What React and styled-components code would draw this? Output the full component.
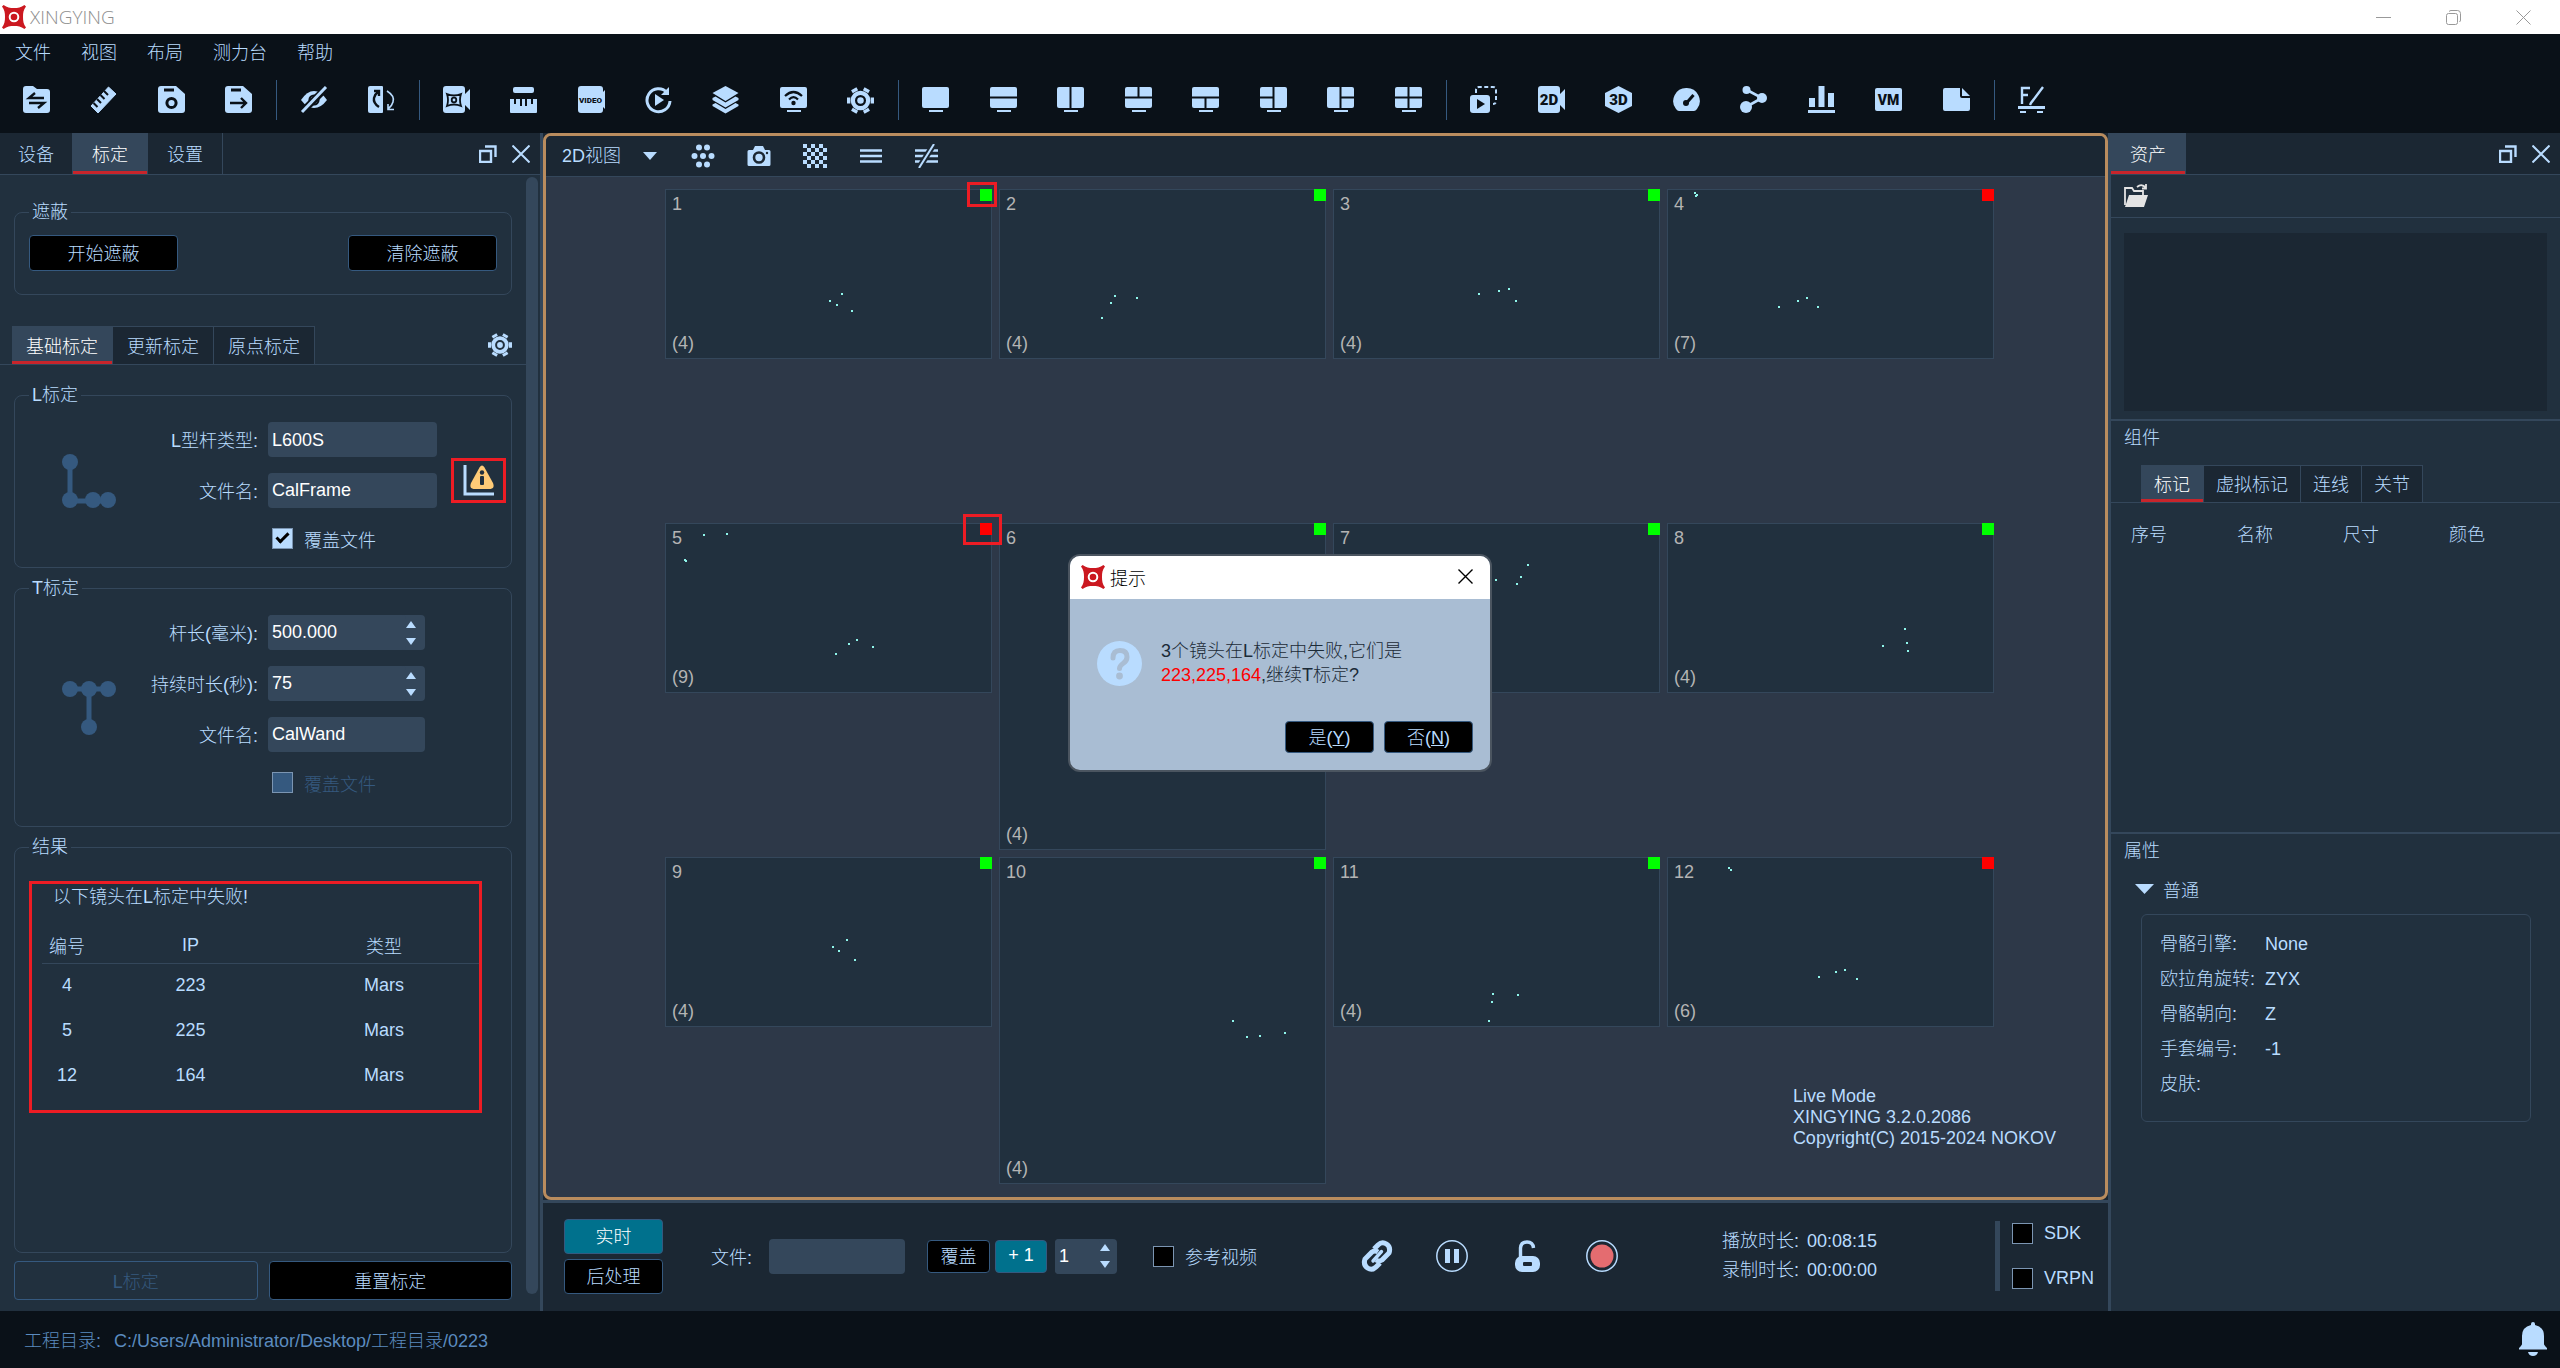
import React from 'react';
import styled, { createGlobalStyle } from 'styled-components';

const c = {
  ink: '#0a1118',
  bar: '#1b2733',
  panel: '#21303e',
  view: '#2d3848',
  line: '#34475b',
  blue: '#b9dcff',
  muted: '#35597f',
  red: '#c8252b',
  mark: '#ed1c24',
  orange: '#b98c5e',
  teal: '#00718d',
};

const Global = createGlobalStyle`
  *, *::before, *::after { box-sizing: border-box; }
  body {
    margin: 0;
    background: ${c.ink};
  }
  body, button, input, select {
    font-family: "Liberation Sans", "Noto Sans CJK SC", sans-serif;
    font-size: 18px;
    font-weight: 300;
    color: ${c.blue};
  }
  svg { display: block; }
`;

/* ---------- icons ---------- */

const Svg = ({ size = 28, w, h, box, children }) => (
  <svg width={w || size} height={h || size} viewBox={box || `0 0 ${w || size} ${h || size}`} fill="currentColor" aria-hidden="true">
    {children}
  </svg>
);
const cut = { stroke: c.ink, fill: 'none', strokeWidth: 2 };
const pen = { stroke: 'currentColor', fill: 'none', strokeWidth: 2 };

const Logo = ({ size = 24 }) => (
  <svg width={size} height={size} viewBox="0 0 24 24" aria-hidden="true">
    <path
      fill="#cb1820"
      d="M0 1.6 1.6 0C5 2.6 8 3 12 3S19 2.6 22.400 0L24 1.600C21.400 5 21 8 21 12s.4 7 3 10.400L22.400 24C19 21.400 16 21 12 21s-7 .4-10.400 3L0 22.400C2.600 19 3 16 3 12S2.600 5 0 1.600Z"
    />
    <circle cx="12" cy="12" r="4.300" fill="#cb1820" stroke="#fff" strokeWidth="2" />
  </svg>
);

const saveBody = 'M3 0h15l9 8v16q0 3-3 3H3q-3 0-3-3V3q0-3 3-3Z';
const camBody = 'M3 0h16q3 0 3 3v5l5-5v21l-5-5v5q0 3-3 3H3q-3 0-3-3V3q0-3 3-3Z';

const Gear = ({ size = 27 }) => (
  <svg width={size} height={size} viewBox="0 0 24 24" fill="currentColor" aria-hidden="true">
    <g fill="none" stroke="currentColor">
      <circle cx="12" cy="12" r="6.800" strokeWidth="3.800" />
      <path d="M12 3V0M12 24v-3M4.200 7.500 1.600 6M22.400 18l-2.600-1.500M4.200 16.500 1.600 18M22.400 6l-2.600 1.500" strokeWidth="5.500" transform="rotate(30 12 12)" />
    </g>
    <circle cx="12" cy="12" r="2.900" />
  </svg>
);

const Screen = ({ cuts }) => (
  <Svg size={28}>
    <rect x="0" y="1" width="27" height="21" rx="2" />
    <rect x="7" y="24" width="14" height="2" />
    <path d={cuts} {...cut} strokeWidth="2" />
  </Svg>
);

const label = { fill: c.ink, fontFamily: 'Roboto, sans-serif', fontWeight: 900, textAnchor: 'middle' };

const toolGroups = [
  {
    width: 230,
    items: [
      ['打开工程', <Svg key="i"><path d="M3 0h7l4 3h10q3 0 3 3v18q0 3-3 3H3q-3 0-3-3V3q0-3 3-3Z" /><path d="M21 12H6l6-5M6 17h15l-6 5" {...cut} strokeWidth="2.400" /></Svg>],
      ['测量', <Svg key="i"><path d="M18.500 1 26 8 8 27 1 20Z" strokeLinejoin="round" stroke="currentColor" strokeWidth="1" /><path d="m14 5 4 4M10.500 9l4 4M7 13l4 4M3.500 17l4 4" {...cut} /></Svg>],
      ['保存', <Svg key="i"><path d={saveBody} /><path d="M6 4h10" {...cut} strokeWidth="3" /><circle cx="13.500" cy="17" r="4.600" {...cut} strokeWidth="3" /></Svg>],
      ['另存为', <Svg key="i"><path d={saveBody} /><path d="M6 4h10" {...cut} strokeWidth="3" /><path d="M5 17h16M16 12l5 5-5 5" {...cut} strokeWidth="2.400" /></Svg>],
    ],
  },
  {
    width: 96,
    items: [
      ['隐藏', <Svg key="i"><path d="M1 14Q7 5 14 5t13 9q-6 8-13 8T1 14Z" /><circle cx="14" cy="14" r="4.500" {...cut} strokeWidth="2.200" /><path d="M27 1 2 26" {...cut} strokeWidth="7" /><path d="M26 1 2 26" {...pen} strokeWidth="3" /></Svg>],
      ['翻转', <Svg key="i"><path d="M2 0h12q1 0 1 1v25q0 1-1 1H2q-2 0-2-2V2q0-2 2-2Z" /><path d="M11 21q-6-4-5-9 1-4 4-6M6 5l5 0 0 5" {...cut} strokeWidth="2.400" /><path d="M19 5q8 5 6 11-1 4-5 7M20 18v5.500h6" {...pen} strokeWidth="1.600" /></Svg>],
    ],
  },
  {
    width: 432,
    items: [
      ['相机', <Svg key="i"><path d={camBody} /><path d="M4 8q7 3 14 0-2 6 0 12-7-3-14 0 2-6 0-12Z" {...cut} strokeWidth="1.800" /><circle cx="11" cy="14" r="2.300" {...cut} strokeWidth="1.800" /></Svg>],
      ['标尺', <Svg key="i"><rect x="3" y="1" width="21" height="6" rx="2" /><path d="M0 13h27v13q0 1-1 1H1q-1 0-1-1Z" /><path d="M5 12v6M11 12v8M16 12v8M22 12v6" {...cut} /></Svg>],
      ['视频', <Svg key="i"><path d="M3 0h19q3 0 3 3v3l2-2v19l-2-2v3q0 3-3 3H3q-3 0-3-3V3q0-3 3-3Z" /><text x="12.500" y="17" fontSize="8" {...label}>VIDEO</text></Svg>],
      ['回放', <Svg key="i"><path d="M22 6.500A11.500 11.500 0 1 0 25 15" {...pen} strokeWidth="3" /><path d="M24 1v8h-8Z" /><path d="m10 8 9 6-9 6Z" /></Svg>],
      ['图层', <Svg key="i"><path d="m13.500 0 13 7-13 8-13-8Z" /><path d="m.5 12 3-1.500 10 6 10-6 3 1.500v2l-13 7.500L.5 14Zm0 6.500 3-1.500 10 6 10-6 3 1.500v1.500l-13 7.500L.5 20Z" /></Svg>],
      ['投屏', <Svg key="i"><rect x="0" y="1" width="27" height="21" rx="2" /><rect x="7" y="24" width="14" height="2" /><path d="M5 10q8.500-8 17 0M9 13.500q4.500-4.500 9 0" {...cut} strokeWidth="2.200" /><circle cx="13.500" cy="17" r="2.200" fill={c.ink} /></Svg>],
      ['选项', <Gear key="i" />],
    ],
  },
  {
    width: 501,
    items: [
      ['单视图', <Screen key="i" cuts="" />],
      ['上下视图', <Screen key="i" cuts="M0 11.500h28" />],
      ['左右视图', <Screen key="i" cuts="M13.500 0v22" />],
      ['上二下一', <Screen key="i" cuts="M0 11.500h28M13.500 0v11" />],
      ['上一下二', <Screen key="i" cuts="M0 11.500h28M13.500 12v10" />],
      ['左二右一', <Screen key="i" cuts="M0 11.500h13M13.500 0v22" />],
      ['左一右二', <Screen key="i" cuts="M14 11.500h14M13.500 0v22" />],
      ['四视图', <Screen key="i" cuts="M0 11.500h28M13.500 0v22" />],
    ],
  },
  {
    width: 501,
    items: [
      ['播放窗口', <Svg key="i"><rect x="0" y="9" width="20" height="18" rx="3" /><path d="m7 13 8 5-8 5Z" fill={c.ink} /><path d="M6 7V4q0-3 3-3h14q3 0 3 3v11q0 3-3 3" {...pen} strokeDasharray="4 2.500" /></Svg>],
      ['2D', <Svg key="i"><path d={camBody} /><text x="11" y="19" fontSize="15" {...label}>2D</text></Svg>],
      ['3D', <Svg key="i"><path d="m13.500 0 13.500 7v13l-13.500 7L0 20V7Z" /><text x="13.500" y="19" fontSize="15" {...label}>3D</text></Svg>],
      ['仪表', <Svg key="i"><path d="M13.500 2a13 13 0 0 1 10.500 21q-1.500 2-3 2H6q-1.500 0-3-2A13 13 0 0 1 13.500 2Z" /><path d="m13.500 17 7-8" {...cut} strokeWidth="3" /><circle cx="13" cy="17" r="3" fill={c.ink} /></Svg>],
      ['骨骼', <Svg key="i"><path d="m7 4 15 8L6 21" {...pen} strokeWidth="2.600" /><circle cx="6.500" cy="4" r="4" /><circle cx="22" cy="12" r="5" /><circle cx="6" cy="21" r="6" /></Svg>],
      ['图表', <Svg key="i"><path d="M1 12h6v9H1Zm9.500-12h6v21h-6ZM20 7h6v14h-6ZM0 24h27v3H0Z" /></Svg>],
      ['VM', <Svg key="i"><rect x="0" y="2" width="27" height="23" rx="2" /><text x="13.500" y="18.500" fontSize="14" {...label}>VM</text></Svg>],
      ['文档', <Svg key="i"><path d="M2 2h15v8q0 2 2 2h8v11q0 2-2 2H2q-2 0-2-2V4q0-2 2-2Z" /><path d="m19 2 8 8h-8Z" /></Svg>],
    ],
  },
  {
    width: 28,
    items: [
      ['力台', <Svg key="i"><path d="M4 18V2h8M4 9h6" {...pen} strokeWidth="2.400" /><path d="M25 1 13 17l-1 2" {...pen} strokeWidth="2.400" /><path d="M0 20h27v3H0Z" /><path d="M2 26h6M19 26h6" {...pen} /></Svg>],
    ],
  },
];

const RestoreIcon = () => (
  <Svg size={18}><path d="M1 6h11v11H1ZM6 1.500h10.500V12" {...pen} strokeWidth="2.400" /></Svg>
);
const CloseIcon = ({ size = 18, width = 2 }) => (
  <Svg size={size}><path d={`M.5.5l${size - 1} ${size - 1}M${size - 0.5}.5L.5 ${size - 0.5}`} {...pen} strokeWidth={width} /></Svg>
);

/* ---------- window chrome ---------- */

const Page = styled.div`
  min-height: 100vh;
  display: flex;
  flex-direction: column;
  background: ${c.ink};
`;
const TitleBar = styled.header`
  display: flex;
  align-items: center;
  height: 34px;
  padding: 0 29px 0 2px;
  gap: 4px;
  background: #fff;
  color: #8e8e8e;
`;
const AppName = styled.span`
  flex: 1;
  font-family: "Open Sans", "Noto Sans", sans-serif;
  font-size: 19px;
`;
const WindowButtons = styled.div`
  display: flex;
  gap: 55px;
`;
const IconButton = styled.button`
  display: flex;
  align-items: center;
  justify-content: center;
  width: ${(p) => p.$size || 28}px;
  height: ${(p) => p.$size || 28}px;
  padding: 0;
  border: 0;
  background: none;
  color: ${(p) => p.$color || c.blue};
`;
const MenuBar = styled.nav`
  display: flex;
  align-items: center;
  gap: 30px;
  height: 33px;
  padding: 0 15px;
`;
const PlainLink = styled.a`
  color: ${c.blue};
  text-decoration: none;
`;
const ToolBar = styled.div`
  display: flex;
  align-items: center;
  height: 66px;
  padding: 0 23px;
`;
const ToolGroup = styled.div`
  display: flex;
  justify-content: space-between;
  width: ${(p) => p.$width}px;
`;
const ToolDivider = styled.span`
  width: 1px;
  height: 40px;
  margin: 0 23px;
  background: ${c.muted};
`;
const Body = styled.main`
  flex: 1;
  display: flex;
`;
const StatusBar = styled.footer`
  display: flex;
  align-items: center;
  gap: 13px;
  height: 57px;
  padding: 0 13px 2px 24px;
  color: #5b8bbf;
`;
const Grow = styled.span`
  flex: 1;
`;

/* ---------- shared controls ---------- */

const TabBar = styled.div`
  display: flex;
  height: ${(p) => p.$height || 42}px;
  padding: 0 ${(p) => p.$right || 0}px 0 ${(p) => p.$left || 0}px;
  border-bottom: 1px solid ${c.line};
  background: ${(p) => (p.$plain ? 'transparent' : c.bar)};
`;
const Tab = styled.button`
  padding: 0 ${(p) => p.$pad || 19}px 2px;
  border: solid ${c.line};
  border-width: ${(p) => (p.$boxed ? 1 : 0)}px 1px 0 0;
  background: ${(p) => (p.$active ? c.line : c.bar)};
  color: ${(p) => (p.$active ? '#fff' : c.blue)};
  box-shadow: ${(p) => (p.$active ? `inset 0 -3px ${c.red}` : 'none')};
`;
const TabTools = styled.div`
  display: flex;
  align-items: center;
  gap: 15px;
  margin-left: auto;
  padding-right: 10px;
`;
const Button = styled.button`
  width: ${(p) => (p.$width ? `${p.$width}px` : 'auto')};
  height: ${(p) => p.$height || 36}px;
  padding: 0 0 2px;
  border: 1px solid ${c.muted};
  border-radius: 4px;
  background: #000;
  color: ${c.blue};
  ${(p) => p.$on && `background: ${c.teal}; color: #fff;`}
  &:disabled {
    background: transparent;
    color: ${c.muted};
  }
`;
const inputLook = `
  width: 100%;
  min-width: 0;
  height: 35px;
  padding: 0 4px;
  border: 0;
  border-radius: 4px;
  outline: 0;
  background: ${c.line};
  color: #fff;
`;
const TextInput = styled.input`${inputLook}`;
const Select = styled.select`
  ${inputLook}
  appearance: none;
`;
const SpinBox = styled.div`
  display: flex;
  width: ${(p) => (p.$width ? `${p.$width}px` : '100%')};
  border-radius: 4px;
  background: ${c.line};
`;
const SpinButtons = styled.div`
  display: flex;
  flex-direction: column;
  justify-content: center;
  gap: 10px;
  padding-right: ${(p) => p.$right || 9}px;
`;
const SpinButton = styled.button`
  padding: 0;
  border: 0;
  background: none;
  color: ${c.blue};
`;
const Spin = ({ id, value, width, right, label: name }) => (
  <SpinBox $width={width}>
    <TextInput id={id} defaultValue={value} inputMode="decimal" aria-label={name} />
    <SpinButtons $right={right}>
      <SpinButton aria-label="增加"><Svg w={10} h={7}><path d="m5 0 5 7H0Z" /></Svg></SpinButton>
      <SpinButton aria-label="减少"><Svg w={10} h={7}><path d="m5 7 5-7H0Z" /></Svg></SpinButton>
    </SpinButtons>
  </SpinBox>
);
const CheckLabel = styled.label`
  display: flex;
  align-items: center;
  gap: 11px;
  color: ${(p) => (p.$off ? c.muted : c.blue)};
`;
const CheckBox = styled.input`
  appearance: none;
  display: grid;
  place-items: center;
  width: 21px;
  height: 21px;
  margin: 0;
  border: 1px solid #7b95b2;
  background: #000;
  &:disabled { background: ${c.muted}; }
  &:checked { background: ${c.blue}; }
  &:checked::after {
    content: "";
    width: 13px;
    height: 7px;
    margin-bottom: 4px;
    border: solid #000;
    border-width: 0 0 3px 3px;
    transform: rotate(-45deg);
  }
`;

/* ---------- left panel ---------- */

const LeftPanel = styled.aside`
  display: flex;
  flex-direction: column;
  flex: 0 0 543px;
  border-right: 3px solid ${c.line};
  background: ${c.panel};
`;
const Scroller = styled.div`
  flex: 1;
  display: flex;
`;
const ScrollTrack = styled.div`
  width: 12px;
  margin: 2px 2px 17px 0;
  border-radius: 6px;
  background: ${c.line};
`;
const PanelContent = styled.div`
  flex: 1;
  display: flex;
  flex-direction: column;
  padding-top: 24px;
`;
const FormsColumn = styled.div`
  flex: 1;
  display: flex;
  flex-direction: column;
  padding-top: 17px;
`;
const Group = styled.fieldset`
  ${(p) => p.$grow && 'flex: 1;'}
  min-width: 0;
  margin: 0 14px ${(p) => p.$after}px;
  padding: 0 14px ${(p) => p.$bottom || 12}px;
  border: 1px solid ${c.line};
  border-radius: 8px;
`;
const Legend = styled.legend`
  padding: 0 3px;
  line-height: 26px;
`;
const SplitRow = styled.div`
  display: flex;
  justify-content: space-between;
  padding-top: 10px;
`;
const CalibrationBody = styled.div`
  display: flex;
  align-items: center;
`;
const WandIcon = styled.div`
  display: flex;
  justify-content: center;
  flex: 0 0 119px;
  color: ${c.muted};
`;
const Form = styled.div`
  display: grid;
  grid-template-columns: 110px ${(p) => p.$field}px;
  gap: 16px 10px;
  align-items: center;
  padding: 14px 0 ${(p) => p.$bottom || 0}px;
`;
const FieldLabel = styled.label`
  padding-bottom: 2px;
  text-align: right;
  white-space: nowrap;
`;
const FormCheck = styled.div`
  grid-column: 2;
  display: flex;
  align-items: center;
  height: 29px;
  padding-left: 4px;
`;
const WarningButton = styled.button`
  display: flex;
  align-items: center;
  justify-content: center;
  flex: 0 0 55px;
  height: 45px;
  margin: 0 -9px 0 14px;
  padding: 0;
  border: 3px solid ${c.mark};
  background: none;
  color: ${c.blue};
`;
const ResultBox = styled.div`
  width: 453px;
  margin-top: 21px;
  padding: 0 0 12px 10px;
  border: 3px solid ${c.mark};
`;
const ResultTable = styled.table`
  width: 100%;
  border-collapse: collapse;
  table-layout: fixed;
  caption {
    padding: 0 11px;
    line-height: 26px;
    text-align: left;
  }
  th {
    height: 53px;
    padding: 18px 0 0;
    border-bottom: 1px solid ${c.line};
    font-weight: 300;
  }
  td {
    height: 45px;
    padding: 0;
    text-align: center;
  }
`;
const FooterButtons = styled.div`
  display: grid;
  grid-template-columns: 1fr 1fr;
  gap: 11px;
  margin: 0 14px 11px;
`;

/* ---------- center ---------- */

const Center = styled.section`
  flex: 1;
  min-width: 0;
  display: flex;
  flex-direction: column;
  background: ${c.bar};
`;
const Viewer = styled.div`
  position: relative;
  flex: 1;
  display: flex;
  flex-direction: column;
  border: 3px solid ${c.orange};
  border-radius: 8px;
  background: ${c.view};
`;
const ViewBar = styled.div`
  display: flex;
  align-items: center;
  gap: 32px;
  height: 41px;
  padding: 0 16px;
  border-bottom: 1px solid ${c.line};
  border-radius: 5px 5px 0 0;
  background: ${c.bar};
`;
const ViewPicker = styled.label`
  display: flex;
  align-items: center;
  gap: 21px;
  margin-right: 2px;
`;
const ViewSelect = styled.select`
  appearance: none;
  padding: 0;
  border: 0;
  outline: 0;
  background: none;
  color: ${c.blue};
`;
const CameraGrid = styled.div`
  display: grid;
  grid-template-columns: repeat(4, minmax(0, 327px));
  gap: 7px;
  justify-content: center;
  padding: 12px 0 0 8px;
`;
const CameraSlot = styled.div`
  aspect-ratio: 1;
`;
const CameraCell = styled.figure`
  position: relative;
  display: flex;
  flex-direction: column;
  justify-content: space-between;
  aspect-ratio: ${(p) => (p.$tall ? '1' : '327 / 170')};
  margin: 0;
  padding: 2px 6px 3px;
  border: 1px solid ${c.line};
  background: ${c.panel};
  color: #b4b4b4;
  line-height: 24px;
`;
const CameraStatus = styled.i`
  position: absolute;
  top: -1px;
  right: -1px;
  width: 12px;
  height: 12px;
  background: ${(p) => (p.$ok ? '#00ff00' : '#ff0000')};
`;
const StatusMark = styled.i`
  position: absolute;
  z-index: 1;
  top: ${(p) => (p.$large ? -10 : -8)}px;
  right: ${(p) => (p.$large ? -11 : -6)}px;
  width: ${(p) => (p.$large ? 39 : 30)}px;
  height: ${(p) => (p.$large ? 31 : 25)}px;
  border: 3px solid ${c.mark};
`;
const Markers = styled.svg`
  position: absolute;
  inset: -1px;
`;
const BuildInfo = styled.p`
  position: absolute;
  right: 49px;
  bottom: 48px;
  margin: 0;
  line-height: 21px;
`;

const PlayBar = styled.div`
  display: flex;
  align-items: center;
  gap: 104px;
  height: 111px;
  padding: 0 14px 2px 21px;
  border-top: 3px solid ${c.line};
`;
const Cluster = styled.div`
  display: flex;
  align-items: center;
  gap: ${(p) => p.$gap || 0}px;
  ${(p) => p.$end && 'margin-left: auto;'}
`;
const ModeButtons = styled.div`
  display: flex;
  flex-direction: column;
  gap: 5px;
`;
const FileField = styled.label`
  display: flex;
  align-items: center;
  gap: 17px;
  margin: 0 22px 0 48px;
  white-space: nowrap;
  input { width: 136px; }
`;
const NameButtons = styled.div`
  display: flex;
  align-items: center;
  gap: 5px;
  margin-right: 8px;
`;
const ReferenceCheck = styled.div`
  margin-left: 36px;
`;
const Durations = styled.dl`
  display: grid;
  grid-template-columns: auto auto;
  column-gap: 8px;
  margin: 0;
  line-height: 29px;
  dd { margin: 0; }
`;
const StreamChecks = styled.div`
  display: flex;
  flex-direction: column;
  gap: 24px;
  padding: 2px 0 2px 12px;
  border-left: 5px solid ${c.line};
`;

/* ---------- right panel ---------- */

const RightPanel = styled.aside`
  display: flex;
  flex-direction: column;
  flex: 0 0 452px;
  border-left: 3px solid ${c.line};
  background: ${c.panel};
`;
const AssetTools = styled.div`
  display: flex;
  align-items: center;
  height: 43px;
  padding: 0 13px;
  border-bottom: 1px solid ${c.line};
`;
const AssetList = styled.div`
  height: 178px;
  margin: 15px 13px 8px;
  background: ${c.bar};
`;
const Section = styled.section`
  flex: ${(p) => p.$share} 1 0;
  border-top: 2px solid ${c.line};
`;
const SectionTitle = styled.h2`
  margin: 0;
  padding-left: 13px;
  font-size: 18px;
  font-weight: 300;
  line-height: 34px;
`;
const MarkerTabs = styled.div`
  padding-top: 10px;
`;
const MarkerTable = styled.table`
  width: 424px;
  border-collapse: collapse;
  table-layout: fixed;
  th {
    height: 60px;
    padding: 0 0 0 20px;
    font-weight: 300;
    text-align: left;
  }
`;
const FoldButton = styled.button`
  display: flex;
  align-items: center;
  gap: 9px;
  height: 32px;
  margin: 5px 0 9px 24px;
  padding: 0;
  border: 0;
  background: none;
`;
const Properties = styled.dl`
  display: grid;
  grid-template-columns: 105px 1fr;
  margin: 0 29px 0 30px;
  padding: 12px 18px 19px;
  border: 1px solid ${c.line};
  border-radius: 6px;
  line-height: 35px;
  white-space: nowrap;
  dd { margin: 0; }
`;

/* ---------- dialog ---------- */

const Overlay = styled.div`
  position: fixed;
  inset: 0;
  z-index: 2;
  display: flex;
  align-items: center;
  justify-content: center;
  padding-bottom: 42px;
`;
const Dialog = styled.div`
  width: 424px;
  overflow: hidden;
  border: 2px solid #4b5560;
  border-radius: 12px;
  background: #a9bdd3;
  color: #1b2a36;
`;
const DialogHead = styled.div`
  display: flex;
  align-items: center;
  gap: 5px;
  height: 43px;
  padding: 0 17px 2px 11px;
  background: #fff;
  color: #000;
`;
const DialogTitle = styled.span`
  flex: 1;
`;
const DialogMessage = styled.div`
  display: flex;
  align-items: center;
  gap: 19px;
  padding: 40px 17px 34px 27px;
  color: #1b2a36;
  line-height: 24px;
  p { margin: 0; }
  svg { flex: none; }
`;
const Failed = styled.span`
  color: #ff0000;
`;
const DialogButtons = styled.div`
  display: flex;
  justify-content: flex-end;
  gap: 10px;
  padding: 0 17px 17px;
`;

/* ---------- data ---------- */

const cameras = [
  { n: 1, count: 4, ok: true, mark: 'small', dots: [[177, 105], [165, 112], [172, 116], [187, 122]] },
  { n: 2, count: 4, ok: true, dots: [[116, 107], [138, 109], [112, 114], [103, 129]] },
  { n: 3, count: 4, ok: true, dots: [[146, 105], [166, 102], [176, 100], [183, 112]] },
  { n: 4, count: 7, dots: [[28, 4], [30, 6], [29, 7], [112, 118], [131, 112], [140, 109], [151, 118]] },
  { n: 5, count: 9, mark: 'large', dots: [[39, 12], [62, 11], [20, 37], [21, 38], [192, 117], [184, 121], [208, 124], [171, 131]] },
  { n: 6, count: 4, ok: true, tall: true, dots: [] },
  { n: 7, ok: true, dots: [[163, 57], [195, 42], [188, 54], [184, 61]] },
  { n: 8, count: 4, ok: true, dots: [[238, 106], [240, 120], [216, 123], [241, 128]] },
  { n: 9, count: 4, ok: true, dots: [[182, 83], [168, 90], [174, 94], [190, 103]] },
  { n: 10, count: 4, ok: true, tall: true, dots: [[234, 164], [248, 180], [261, 179], [286, 176]] },
  { n: 11, count: 4, ok: true, dots: [[160, 137], [185, 138], [159, 145], [156, 164]] },
  { n: 12, count: 6, dots: [[62, 11], [64, 13], [152, 120], [169, 115], [178, 113], [190, 122]] },
];

const failures = [['4', '223', 'Mars'], ['5', '225', 'Mars'], ['12', '164', 'Mars']];

const properties = [['骨骼引擎:', 'None'], ['欧拉角旋转:', 'ZYX'], ['骨骼朝向:', 'Z'], ['手套编号:', '-1'], ['皮肤:', '']];

/* ---------- page ---------- */

const Camera = ({ n, count, ok, tall, mark, dots }) => (
  <CameraSlot>
    <CameraCell $tall={tall}>
      <Markers viewBox={`0 0 327 ${tall ? 327 : 170}`} fill="#8ff5ea" aria-hidden="true">
        {dots.map(([x, y]) => <rect key={`${x}-${y}`} x={x - 1} y={y - 1} width="2" height="2" />)}
      </Markers>
      <span>{n}</span>
      {count && <span>({count})</span>}
      <CameraStatus $ok={ok} />
      {mark && <StatusMark $large={mark === 'large'} />}
    </CameraCell>
  </CameraSlot>
);

const CalibrationForms = () => (
  <FormsColumn>
    <Group $after={7} $bottom={14}>
      <Legend>L标定</Legend>
      <CalibrationBody>
        <WandIcon>
          <Svg w={54} h={54}>
            <path d="M8 8v39h38" {...pen} strokeWidth="5" />
            <circle cx="8" cy="8" r="8" /><circle cx="8" cy="46" r="8" /><circle cx="31" cy="46" r="8" /><circle cx="46" cy="46" r="8" />
          </Svg>
        </WandIcon>
        <Form $field={169}>
          <FieldLabel htmlFor="l-type">L型杆类型:</FieldLabel>
          <Select id="l-type"><option>L600S</option></Select>
          <FieldLabel htmlFor="l-file">文件名:</FieldLabel>
          <TextInput id="l-file" defaultValue="CalFrame" />
          <FormCheck>
            <CheckLabel><CheckBox type="checkbox" defaultChecked />覆盖文件</CheckLabel>
          </FormCheck>
        </Form>
        <WarningButton aria-label="L标定警告">
          <Svg w={31} h={33}>
            <path d="M2 1v29h29" {...pen} strokeWidth="3" />
            <path d="M16.500 3.500q2.500-4 5 0L30 19q2 5-2.500 6h-17Q6 24 8 19Z" fill="#ffcb77" />
            <circle cx="19" cy="8.500" r="2.200" fill={c.panel} />
            <rect x="17" y="12" width="4" height="9" rx="1" fill={c.panel} />
          </Svg>
        </WarningButton>
      </CalibrationBody>
    </Group>
    <Group $after={7}>
      <Legend>T标定</Legend>
      <CalibrationBody>
        <WandIcon>
          <Svg w={54} h={54}>
            <path d="M8 8h38M27 8v38" {...pen} strokeWidth="5" />
            <circle cx="8" cy="8" r="8" /><circle cx="27" cy="8" r="8" /><circle cx="46" cy="8" r="8" /><circle cx="27" cy="46" r="8" />
          </Svg>
        </WandIcon>
        <Form $field={157} $bottom={17}>
          <FieldLabel htmlFor="t-length">杆长(毫米):</FieldLabel>
          <Spin id="t-length" value="500.000" />
          <FieldLabel htmlFor="t-time">持续时长(秒):</FieldLabel>
          <Spin id="t-time" value="75" />
          <FieldLabel htmlFor="t-file">文件名:</FieldLabel>
          <TextInput id="t-file" defaultValue="CalWand" />
          <FormCheck>
            <CheckLabel $off><CheckBox type="checkbox" disabled />覆盖文件</CheckLabel>
          </FormCheck>
        </Form>
      </CalibrationBody>
    </Group>
    <Group $after={8} $grow>
      <Legend>结果</Legend>
      <ResultBox>
        <ResultTable>
          <caption>以下镜头在L标定中失败!</caption>
          <colgroup><col width="50" /><col width="197" /><col /></colgroup>
          <thead><tr><th>编号</th><th>IP</th><th>类型</th></tr></thead>
          <tbody>
            {failures.map((row) => (
              <tr key={row[0]}>{row.map((cell) => <td key={cell}>{cell}</td>)}</tr>
            ))}
          </tbody>
        </ResultTable>
      </ResultBox>
    </Group>
    <FooterButtons>
      <Button $height={39} disabled>L标定</Button>
      <Button $height={39}>重置标定</Button>
    </FooterButtons>
  </FormsColumn>
);

const CalibrationPanel = () => (
  <LeftPanel>
    <TabBar>
      <Tab $pad={18}>设备</Tab>
      <Tab $active>标定</Tab>
      <Tab>设置</Tab>
      <TabTools>
        <IconButton $size={18} aria-label="浮动"><RestoreIcon /></IconButton>
        <IconButton $size={18} aria-label="关闭"><CloseIcon /></IconButton>
      </TabTools>
    </TabBar>
    <Scroller>
      <PanelContent>
        <Group $after={31} $bottom={23}>
          <Legend>遮蔽</Legend>
          <SplitRow>
            <Button $width={149}>开始遮蔽</Button>
            <Button $width={149}>清除遮蔽</Button>
          </SplitRow>
        </Group>
        <TabBar $height={39} $left={12} $right={4} $plain>
          <Tab $pad={14} $boxed $active>基础标定</Tab>
          <Tab $pad={14} $boxed>更新标定</Tab>
          <Tab $pad={14} $boxed>原点标定</Tab>
          <TabTools><IconButton $size={24} aria-label="标定设置"><Gear size={24} /></IconButton></TabTools>
        </TabBar>
        <CalibrationForms />
      </PanelContent>
      <ScrollTrack />
    </Scroller>
  </LeftPanel>
);

const CenterArea = () => (
  <Center>
    <Viewer>
      <ViewBar>
        <ViewPicker>
          <ViewSelect aria-label="视图"><option>2D视图</option></ViewSelect>
          <Svg w={14} h={8}><path d="M0 0h14L7 8Z" /></Svg>
        </ViewPicker>
        <IconButton $size={24} aria-label="标记点">
          <Svg size={24}>
            <circle cx="8" cy="3.500" r="3" /><circle cx="16" cy="3.500" r="3" />
            <circle cx="3.500" cy="12" r="3" /><circle cx="12" cy="12" r="3" /><circle cx="20.500" cy="12" r="3" />
            <circle cx="8" cy="20.500" r="3" /><circle cx="16" cy="20.500" r="3" />
          </Svg>
        </IconButton>
        <IconButton $size={24} aria-label="快照">
          <Svg size={24}>
            <path d="M8 2h8l2 4h4q1.500 0 1.500 1.500v13Q23.500 22 22 22H2Q.5 22 .5 20.500v-13Q.5 6 2 6h4Z" />
            <circle cx="12" cy="13.500" r="5" fill="none" stroke={c.bar} strokeWidth="2.600" /><circle cx="20" cy="9" r="1.200" fill={c.bar} />
          </Svg>
        </IconButton>
        <IconButton $size={24} aria-label="网格">
          <Svg size={24}>
            {[0, 1, 2, 3, 4, 5].flatMap((y) => [0, 1, 2].map((x) => (
              <rect key={`${x}${y}`} x={x * 8 + (y % 2) * 4} y={y * 4} width="4" height="4" />
            )))}
          </Svg>
        </IconButton>
        <IconButton $size={24} aria-label="列表">
          <Svg size={24}><path d="M1 6.500h22M1 12h22M1 17.500h22" {...pen} strokeWidth="2.400" /></Svg>
        </IconButton>
        <IconButton $size={24} aria-label="取消列表">
          <Svg size={24}>
            <path d="M0 6.500h23M0 12h23M0 17.500h23" {...pen} strokeWidth="2.400" />
            <path d="M19 0 4 24" fill="none" stroke={c.bar} strokeWidth="6" />
            <path d="M19 0 4 24" {...pen} />
          </Svg>
        </IconButton>
      </ViewBar>
      <CameraGrid>
        {cameras.map((cam) => <Camera key={cam.n} {...cam} />)}
      </CameraGrid>
      <BuildInfo>Live Mode<br />XINGYING 3.2.0.2086<br />Copyright(C) 2015-2024 NOKOV</BuildInfo>
    </Viewer>
    <PlayBar>
      <Cluster>
        <ModeButtons>
          <Button $width={99} $height={35} $on>实时</Button>
          <Button $width={99} $height={35}>后处理</Button>
        </ModeButtons>
        <FileField>文件:<TextInput /></FileField>
        <NameButtons>
          <Button $width={63} $height={33}>覆盖</Button>
          <Button $width={52} $height={33} $on>+ 1</Button>
        </NameButtons>
        <Spin value="1" width={62} right={7} label="序号" />
        <ReferenceCheck><CheckLabel><CheckBox type="checkbox" />参考视频</CheckLabel></ReferenceCheck>
      </Cluster>
      <Cluster $gap={43}>
        <IconButton $size={32} aria-label="连接">
          <Svg size={32}>
            <g fill="none" stroke="currentColor" strokeWidth="5">
              <path d="m13 9 4-4q4-4 8.500-1t2.500 9l-7 7q-3 2-6 0" />
              <path d="m19 23-4 4q-4 4-8.500 1T4 19l7-7q3-2 6 0" />
            </g>
            <path d="m12 21 8.500-9.500" {...pen} strokeWidth="3.400" strokeLinecap="round" />
          </Svg>
        </IconButton>
        <IconButton $size={32} aria-label="暂停">
          <Svg size={32}><circle cx="16" cy="16" r="15.200" {...pen} strokeWidth="1.500" /><path d="M9 9h5v14H9Zm9 0h5v14h-5Z" /></Svg>
        </IconButton>
        <IconButton $size={32} aria-label="解锁">
          <Svg size={32}>
            <path d="M9.500 18V8Q10 2 16 2t6.500 6" {...pen} strokeWidth="3.400" />
            <rect x="4" y="16" width="25" height="16" rx="7" /><rect x="12" y="22" width="9" height="4" rx="1" fill={c.bar} />
          </Svg>
        </IconButton>
        <IconButton $size={32} aria-label="录制">
          <Svg size={32}><circle cx="16" cy="16" r="15.200" {...pen} strokeWidth="1.500" /><circle cx="16" cy="16" r="11.500" fill="#e46c70" /></Svg>
        </IconButton>
      </Cluster>
      <Durations>
        <dt>播放时长:</dt><dd>00:08:15</dd>
        <dt>录制时长:</dt><dd>00:00:00</dd>
      </Durations>
      <Cluster $end>
        <StreamChecks>
          <CheckLabel><CheckBox type="checkbox" />SDK</CheckLabel>
          <CheckLabel><CheckBox type="checkbox" />VRPN</CheckLabel>
        </StreamChecks>
      </Cluster>
    </PlayBar>
  </Center>
);

const AssetPanel = () => (
  <RightPanel>
    <TabBar>
      <Tab $active>资产</Tab>
      <TabTools>
        <IconButton $size={18} aria-label="浮动"><RestoreIcon /></IconButton>
        <IconButton $size={18} aria-label="关闭"><CloseIcon /></IconButton>
      </TabTools>
    </TabBar>
    <AssetTools>
      <IconButton $size={24} $color="#e4e4e4" aria-label="打开">
        <Svg size={24}>
          <path d="M1 21V4h7l2 3h9v4" {...pen} strokeWidth="1.800" />
          <path d="M5 11h19l-4 12H1Z" />
          <path d="M13 3q5-4 9 1M22 0v4.500h-4" {...pen} strokeWidth="1.800" />
        </Svg>
      </IconButton>
    </AssetTools>
    <AssetList />
    <Section $share={412}>
      <SectionTitle>组件</SectionTitle>
      <MarkerTabs>
        <TabBar $height={38} $left={30} $plain>
          <Tab $pad={13} $boxed $active>标记</Tab>
          <Tab $pad={12} $boxed>虚拟标记</Tab>
          <Tab $pad={12} $boxed>连线</Tab>
          <Tab $pad={12} $boxed>关节</Tab>
        </TabBar>
      </MarkerTabs>
      <MarkerTable>
        <thead><tr><th>序号</th><th>名称</th><th>尺寸</th><th>颜色</th></tr></thead>
      </MarkerTable>
    </Section>
    <Section $share={478}>
      <SectionTitle>属性</SectionTitle>
      <FoldButton aria-expanded="true">
        <Svg w={19} h={10}><path d="M0 0h19l-9.500 10Z" /></Svg>
        普通
      </FoldButton>
      <Properties>
        {properties.map(([name, value]) => (
          <React.Fragment key={name}><dt>{name}</dt><dd>{value}</dd></React.Fragment>
        ))}
      </Properties>
    </Section>
  </RightPanel>
);

export default function App() {
  return (
    <Page>
      <Global />
      <TitleBar>
        <Logo />
        <AppName>XINGYING</AppName>
        <WindowButtons>
          <IconButton $size={15} $color="#999" aria-label="最小化"><Svg size={15}><path d="M0 7.500h15" {...pen} strokeWidth="1" /></Svg></IconButton>
          <IconButton $size={15} $color="#999" aria-label="还原">
            <Svg size={15}><rect x=".5" y="3.500" width="11" height="11" rx="2" {...pen} strokeWidth="1" /><path d="M3 1.500Q4 .5 5 .5h6.500q3 0 3 3V10q0 1-1 2" {...pen} strokeWidth="1" /></Svg>
          </IconButton>
          <IconButton $size={15} $color="#999" aria-label="关闭窗口"><CloseIcon size={15} width={1} /></IconButton>
        </WindowButtons>
      </TitleBar>
      <MenuBar>
        {['文件', '视图', '布局', '测力台', '帮助'].map((m) => <PlainLink key={m} href="#">{m}</PlainLink>)}
      </MenuBar>
      <ToolBar>
        {toolGroups.map((group, i) => (
          <React.Fragment key={group.items[0][0]}>
            {i > 0 && <ToolDivider />}
            <ToolGroup $width={group.width}>
              {group.items.map(([name, icon]) => <IconButton key={name} aria-label={name}>{icon}</IconButton>)}
            </ToolGroup>
          </React.Fragment>
        ))}
      </ToolBar>
      <Body>
        <CalibrationPanel />
        <CenterArea />
        <AssetPanel />
      </Body>
      <StatusBar>
        <span>工程目录:</span>
        <span>C:/Users/Administrator/Desktop/工程目录/0223</span>
        <Grow />
        <IconButton aria-label="通知">
          <Svg w={28} h={34}>
            <path d="M12 2q0-2 2-2t2 2v1q9 2 9 11v8q0 1 3 4v1.500H0V26q3-3 3-4v-8Q3 5 12 3Zm-3 28h10q-1 4-5 4t-5-4Z" />
          </Svg>
        </IconButton>
      </StatusBar>
      <Overlay>
        <Dialog role="dialog" aria-label="提示">
          <DialogHead>
            <Logo />
            <DialogTitle>提示</DialogTitle>
            <IconButton $size={15} $color="#000" aria-label="关闭对话框"><CloseIcon size={15} width={1.4} /></IconButton>
          </DialogHead>
          <DialogMessage>
            <svg width="45" height="45" viewBox="0 0 45 45" aria-hidden="true">
              <circle cx="22.500" cy="22.500" r="22.500" fill={c.blue} />
              <path d="M16 17q0-7.500 7-7.500t7 6.500q0 4-4 6.500-3.500 2.500-3.500 5" fill="none" stroke="#a9bdd3" strokeWidth="5" strokeLinecap="round" />
              <circle cx="22.500" cy="35" r="3.400" fill="#a9bdd3" />
            </svg>
            <p>3个镜头在L标定中失败,它们是<br /><Failed>223,225,164</Failed>,继续T标定?</p>
          </DialogMessage>
          <DialogButtons>
            <Button $width={89} $height={32}>是(<u>Y</u>)</Button>
            <Button $width={89} $height={32}>否(<u>N</u>)</Button>
          </DialogButtons>
        </Dialog>
      </Overlay>
    </Page>
  );
}
